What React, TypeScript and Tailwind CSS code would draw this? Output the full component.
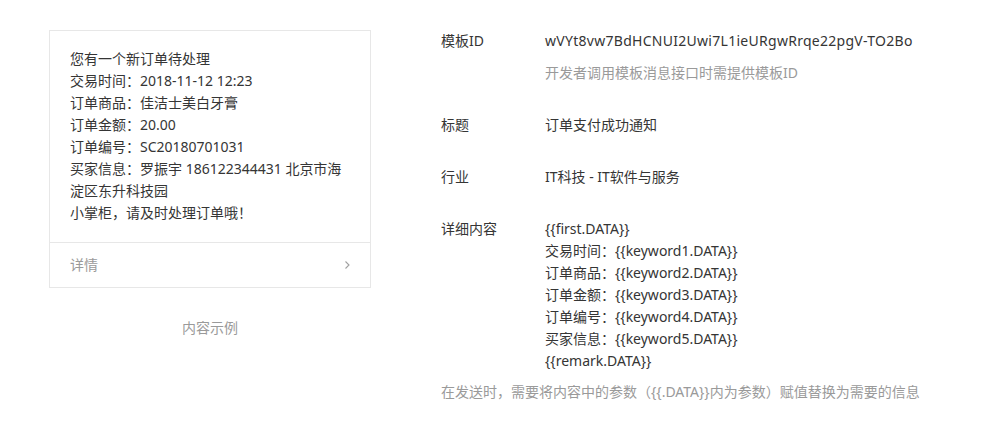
import React from "react";

const font = {
    fontFamily: '"Noto Sans", "Noto Sans CJK SC", sans-serif',
};

const previewLines = [
    "您有一个新订单待处理",
    "交易时间：2018-11-12 12:23",
    "订单商品：佳洁士美白牙膏",
    "订单金额：20.00",
    "订单编号：SC20180701031",
    "买家信息：罗振宇 186122344431 北京市海淀区东升科技园",
    "小掌柜，请及时处理订单哦！",
];

const contentLines = [
    "{{first.DATA}}",
    "交易时间：{{keyword1.DATA}}",
    "订单商品：{{keyword2.DATA}}",
    "订单金额：{{keyword3.DATA}}",
    "订单编号：{{keyword4.DATA}}",
    "买家信息：{{keyword5.DATA}}",
    "{{remark.DATA}}",
];

const Row: React.FC<{ label: string; children: React.ReactNode }> = ({ label, children }) => (
    <div className="flex">
        <div className="w-[104px] shrink-0 text-[#353535]">{label}</div>
        <div className="flex-1 text-[#353535]">{children}</div>
    </div>
);

export default function App() {
    return (
        <div
            className="min-h-screen bg-white pt-[30px] pl-[49px] text-[14px] leading-[22px]"
            style={font}
        >
            <div className="flex gap-[70px]">
                {/* preview card */}
                <div className="w-[322px] shrink-0">
                    <div className="border border-[#e7e7e7] bg-white">
                        <div className="px-[20px] pt-[17px] pb-[18px] text-[#353535]">
                            {previewLines.map((line) => (
                                <p key={line}>{line}</p>
                            ))}
                        </div>
                        <div className="flex h-[45px] items-center justify-between border-t border-[#e7e7e7] px-[20px] text-[#9a9a9a]">
                            <span>详情</span>
                            <svg width="7" height="10" viewBox="0 0 7 10" className="mr-[-1px]">
                                <path d="M1.5 1.5 L5 5 L1.5 8.5" fill="none" stroke="#a0a0a0" strokeWidth="1.1" />
                            </svg>
                        </div>
                    </div>
                    <p className="mt-[29px] text-center text-[#9a9a9a]">内容示例</p>
                </div>

                {/* template detail */}
                <div className="flex flex-col">
                    <Row label="模板ID">
                        <p className="tracking-[0.28px]">wVYt8vw7BdHCNUI2Uwi7L1ieURgwRrqe22pgV-TO2Bo</p>
                        <p className="mt-[10px] text-[#9a9a9a]">开发者调用模板消息接口时需提供模板ID</p>
                    </Row>
                    <div className="mt-[30px]">
                        <Row label="标题">订单支付成功通知</Row>
                    </div>
                    <div className="mt-[30px]">
                        <Row label="行业">IT科技 - IT软件与服务</Row>
                    </div>
                    <div className="mt-[30px]">
                        <Row label="详细内容">
                            {contentLines.map((line) => (
                                <p key={line}>{line}</p>
                            ))}
                        </Row>
                    </div>
                    <p className="mt-[9px] text-[#9a9a9a]">
                        在发送时，需要将内容中的参数（{"{{.DATA}}"}内为参数）赋值替换为需要的信息
                    </p>
                </div>
            </div>
        </div>
    );
}
